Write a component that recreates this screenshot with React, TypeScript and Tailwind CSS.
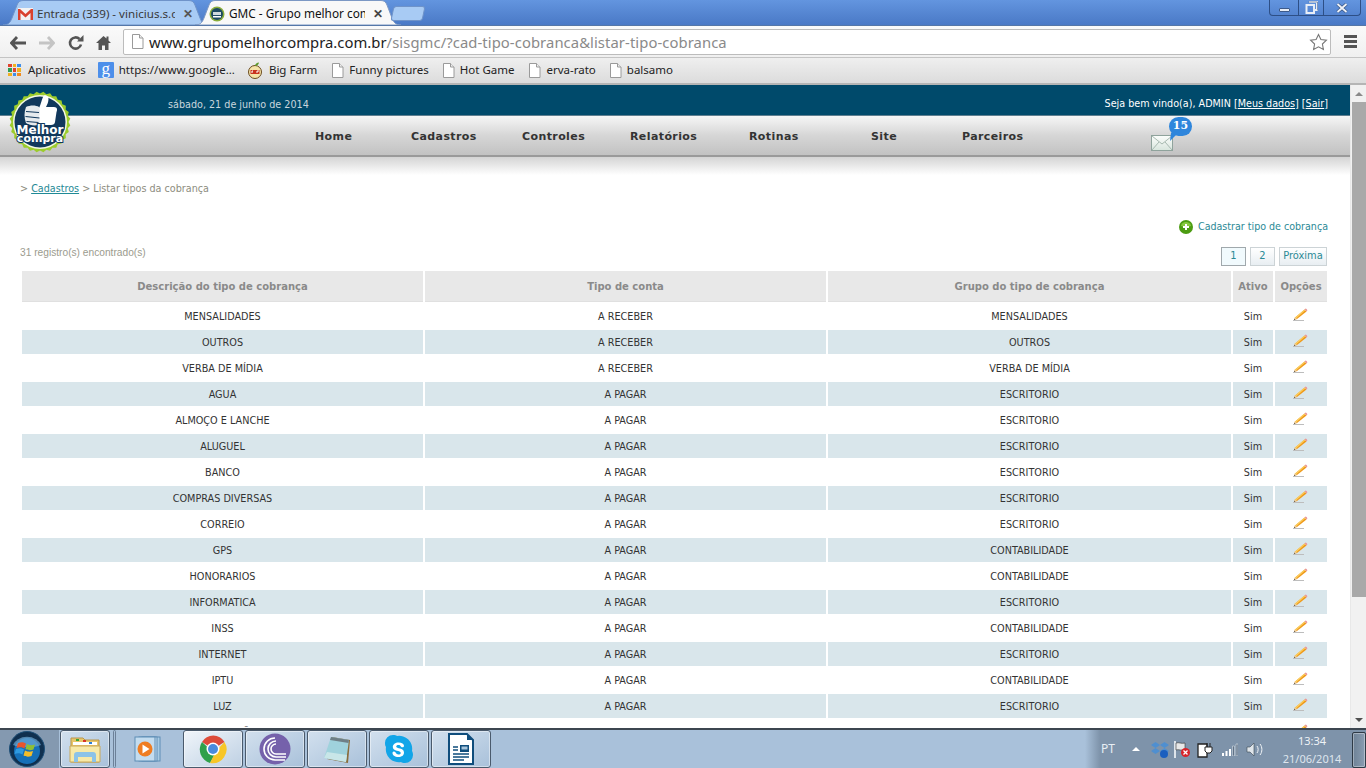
import React from 'react';

const rows = [
  ['MENSALIDADES', 'A RECEBER', 'MENSALIDADES'],
  ['OUTROS', 'A RECEBER', 'OUTROS'],
  ['VERBA DE MÍDIA', 'A RECEBER', 'VERBA DE MÍDIA'],
  ['AGUA', 'A PAGAR', 'ESCRITORIO'],
  ['ALMOÇO E LANCHE', 'A PAGAR', 'ESCRITORIO'],
  ['ALUGUEL', 'A PAGAR', 'ESCRITORIO'],
  ['BANCO', 'A PAGAR', 'ESCRITORIO'],
  ['COMPRAS DIVERSAS', 'A PAGAR', 'ESCRITORIO'],
  ['CORREIO', 'A PAGAR', 'ESCRITORIO'],
  ['GPS', 'A PAGAR', 'CONTABILIDADE'],
  ['HONORARIOS', 'A PAGAR', 'CONTABILIDADE'],
  ['INFORMATICA', 'A PAGAR', 'ESCRITORIO'],
  ['INSS', 'A PAGAR', 'CONTABILIDADE'],
  ['INTERNET', 'A PAGAR', 'ESCRITORIO'],
  ['IPTU', 'A PAGAR', 'CONTABILIDADE'],
  ['LUZ', 'A PAGAR', 'ESCRITORIO'],
  ['MANUTENÇÃO', 'A PAGAR', 'ESCRITORIO'],
];

const navItems = [
  { label: 'Home', w: 'w-[96px]' },
  { label: 'Cadastros', w: 'w-[111px]' },
  { label: 'Controles', w: 'w-[108px]' },
  { label: 'Relatórios', w: 'w-[119px]' },
  { label: 'Rotinas', w: 'w-[122px]' },
  { label: 'Site', w: 'w-[91px]' },
  { label: 'Parceiros', w: 'w-[96px]' },
];

const PageIcon = () => (
  <svg width="13" height="15" viewBox="0 0 13 15" className="shrink-0">
    <path d="M1.5 .5h7l3.500 3.500v10.500h-10.500z" fill="#fff" stroke="#9a9a9a" />
    <path d="M8.500 .5v3.500h3.500" fill="#eee" stroke="#9a9a9a" />
  </svg>
);

const Pencil = () => (
  <svg width="16" height="13" viewBox="0 0 16 13" className="mx-auto block">
    <path d="M0 12.500h11" stroke="#bdbdbd" strokeWidth="1" />
    <path d="M1 12l1-2.500L11.500 1.500l2 2L4 11z" fill="#f09a1a" />
    <path d="M2 9.500L11.500 1.500l.8.8L3 10.500z" fill="#fbd062" />
    <path d="M1 12l1-2.500 2 1.500z" fill="#e9cfa5" />
    <path d="M1 12l.4-1.200 .9.7z" fill="#333" />
    <path d="M11.500 1.500l1-1c.7 0 1.700 1 1.900 1.900l-.9 1.100z" fill="#ea9a9a" />
  </svg>
);

const Logo = () => (
  <svg width="62" height="62" viewBox="0 0 62 62" className="absolute left-[9px] top-[6px] z-10">
    <polygon
      fill="#9ccc2c"
      points={Array.from({ length: 56 }, (_, i) => {
        const a = (i * Math.PI) / 28;
        const r = i % 2 ? 30.500 : 28.500;
        return `${31 + r * Math.cos(a)},${31 + r * Math.sin(a)}`;
      }).join(' ')}
    />
    <circle cx="31" cy="31" r="27" fill="#f4f8e4" />
    <circle cx="31" cy="31" r="25.500" fill="#11385c" />
    <path d="M30 17C32 13 33 8 34 6C35 3 39.500 4 39.500 8C39.500 11 38 14 37 16L45 16C48.500 16 48.500 19 47.500 21L46 31C46 33 44 34 42 34L30 34Z" fill="#fff" />
    <path d="M17 16c4-2 10-2 13 0l1 5-1 5 1 5-2 3c-4 1-9 0-12-2-2-5-2-11 0-16z" fill="#e6eaee" />
    <path d="M17 20.500l13 1M16.500 25.500l14 1.500M17.500 30.500l12 1" stroke="#11385c" strokeWidth="1.100" />
    <text x="31" y="43" textAnchor="middle" fontFamily="'DejaVu Sans', sans-serif" fontWeight="700" fontSize="12" fill="#fff" stroke="#11385c" strokeWidth="2" paintOrder="stroke">Melhor</text>
    <text x="31" y="51" textAnchor="middle" fontFamily="'DejaVu Sans', sans-serif" fontWeight="700" fontSize="11" fill="#fff" stroke="#11385c" strokeWidth="2" paintOrder="stroke">compra</text>
  </svg>
);

const TabShape = ({ fill, stroke }: { fill: string; stroke: string }) => (
  <svg width="206" height="25" viewBox="0 0 206 25" className="absolute left-0 top-0">
    <path d="M0 25c5 0 7-2 9-7l5-13c1-3 3-4.500 6-4.500h166c3 0 5 1.500 6 4.500l5 13c2 5 4 7 9 7z" fill={fill} stroke={stroke} />
  </svg>
);

const Gmail = () => (
  <svg width="15" height="12" viewBox="0 0 15 12" className="shrink-0">
    <rect x="0" y="0" width="15" height="12" fill="#f3f3f3" />
    <path d="M0 12V1h2l5.500 5L13 1h2v11h-2.500V5L7.500 9.500 2.500 5v7z" fill="#d9412e" />
  </svg>
);

const Favicon = () => (
  <svg width="16" height="16" viewBox="0 0 16 16" className="shrink-0">
    <circle cx="8" cy="8" r="7.500" fill="#8aae3c" />
    <circle cx="8" cy="8" r="6" fill="#1d4a63" />
    <path d="M4 6h8v3H4z" fill="#cfd9dc" />
    <path d="M4 10h8v1.500H4z" fill="#fff" />
  </svg>
);

const Google8 = () => (
  <div className="flex h-[16px] w-[16px] shrink-0 items-center justify-center rounded-[1px] bg-[#4d8fea] pb-[3px] font-['Liberation_Serif',serif] text-[17px] leading-none text-white">
    g
  </div>
);

const AppsIcon = () => {
  const colors = ['#e0432f', '#f2b01e', '#3f8ee8', '#2f9e55', '#e0432f', '#f2b01e', '#f2b01e', '#3f8ee8', '#f08a1d'];
  return (
    <div className="grid h-[13px] w-[13px] shrink-0 grid-cols-3 gap-[1px]">
      {colors.map((c, i) => (
        <span key={i} className="block h-[3.600px] w-[3.600px]" style={{ backgroundColor: c }} />
      ))}
    </div>
  );
};

const BigFarm = () => (
  <svg width="16" height="17" viewBox="0 0 16 17" className="shrink-0">
    <circle cx="8" cy="10" r="6.500" fill="#f4e3a8" stroke="#6a4a1c" />
    <path d="M8 4c0-2 2-3.500 4-3.500-.3 2-2 3.500-4 3.500z" fill="#5c9a2c" />
    <path d="M3.500 8h9v4h-9z" fill="#c8321e" />
    <path d="M5 9v2M6 9H5M10 9h2M10 9v2" stroke="#fff" strokeWidth="1" />
  </svg>
);

const TaskButton = ({ children, active, narrow }: { children: React.ReactNode; active?: boolean; narrow?: boolean }) => (
  <div
    className={`flex h-[38px] shrink-0 items-center justify-center rounded-[3px] border border-[#4a5a6c] shadow-[inset_0_0_0_1px_rgba(255,255,255,.45)] ${
      narrow ? 'w-[50px]' : 'w-[60px]'
    } ${active ? 'bg-gradient-to-br from-[#f0f5fa] to-[#bed0e3]' : 'bg-gradient-to-br from-[#d2e0ee] to-[#a9c1da]'}`}
  >
    {children}
  </div>
);

export default function App() {
  return (
    <div className="flex h-[768px] w-[1366px] flex-col overflow-hidden bg-white font-['Noto_Sans',sans-serif]">
      {/* tab strip */}
      <div className="relative flex h-[25px] shrink-0 items-start bg-gradient-to-b from-[#6395df] to-[#4a79c6] pl-[3px]">
        <div className="relative h-[25px] w-[206px]">
          <TabShape fill="#a8cbf4" stroke="#6f93c9" />
          <div className="relative flex h-[25px] items-center pl-[15px] pt-[2px] text-[11.600px] text-[#3a3a3a]">
            <Gmail />
            <span className="ml-[4px] w-[138px] overflow-hidden whitespace-nowrap">Entrada (339) - vinicius.s.d</span>
            <span className="ml-[8px] text-[12px] font-bold text-[#555]">✕</span>
          </div>
        </div>
        <div className="relative ml-[-14px] h-[25px] w-[206px]">
          <TabShape fill="#f8f8f8" stroke="#7c98c4" />
          <div className="relative flex h-[25px] items-center pl-[14px] pt-[2px] text-[11.800px] text-[#111]">
            <Favicon />
            <span className="ml-[4px] w-[136px] overflow-hidden whitespace-nowrap">GMC - Grupo melhor com</span>
            <span className="ml-[8px] text-[12px] font-bold text-[#444]">✕</span>
          </div>
        </div>
        <div className="ml-[-9px] mt-[6px] h-[15px] w-[32px] -skew-x-12 rounded-[3px] border border-[#6f93c9] bg-[#a8cbf4]" />
        <div className="ml-auto mr-[5px] flex h-[16px] w-[92px] overflow-hidden rounded-b-[4px] border border-t-0 border-[#2d4f86] text-[#fff]">
          <div className="flex w-[29px] items-center justify-center border-r border-[#2d4f86]">
            <span className="mt-[4px] block h-[4px] w-[11px] rounded-[1px] border border-[#3d5a8a] bg-[#e8eef7]" />
          </div>
          <div className="flex w-[25px] items-center justify-center border-r border-[#2d4f86]">
            <svg width="13" height="13" viewBox="0 0 13 13">
              <path d="M4 1h8v8h-2M1.500 4h7.500v8h-7.500z" fill="none" stroke="#e8eef7" strokeWidth="2" />
              <path d="M3.500 1h9v8.500" fill="none" stroke="#3d5a8a" strokeWidth=".6" />
            </svg>
          </div>
          <div className="flex flex-1 items-center justify-center">
            <svg width="12" height="10" viewBox="0 0 12 10">
              <path d="M1.500 1l9 8M10.500 1l-9 8" stroke="#3d5a8a" strokeWidth="3.400" />
              <path d="M1.500 1l9 8M10.500 1l-9 8" stroke="#eef2f8" strokeWidth="1.800" />
            </svg>
          </div>
        </div>
      </div>

      {/* toolbar */}
      <div className="flex h-[32px] shrink-0 items-center border-t border-[#5577a8] bg-gradient-to-b from-[#fafafa] to-[#f0f0f0]">
        <div className="flex w-[123px] shrink-0 items-center pl-[10px] pt-[2px]">
          <svg width="16" height="14" viewBox="0 0 16 14">
            <path d="M7 1L1.500 7 7 13M2 7h14" fill="none" stroke="#555" strokeWidth="2.800" />
          </svg>
          <svg width="16" height="14" viewBox="0 0 16 14" className="ml-[13px]">
            <path d="M9 1l5.500 6L9 13M14 7H0" fill="none" stroke="#c4c4c4" strokeWidth="2.800" />
          </svg>
          <svg width="16" height="16" viewBox="0 0 16 16" className="ml-[13px]">
            <path d="M13 9.500A5.600 5.600 0 1 1 11.500 4" fill="none" stroke="#555" strokeWidth="2.600" />
            <path d="M9 6.500h6.500V0z" fill="#555" />
          </svg>
          <svg width="15" height="15" viewBox="0 0 15 15" className="ml-[12px]">
            <path d="M7.500 1L0 8h2.500v7h3.500v-4.500h3V15h3.500V8H15l-2.500-2.500V1.500h-2v2z" fill="#555" />
          </svg>
        </div>
        <div className="flex h-[26px] w-[1208px] items-center rounded-[2px] border border-[#bcbcbc] bg-white pl-[7px] pr-[2px] text-[14.800px] leading-none">
          <PageIcon />
          <span className="ml-[5px] whitespace-nowrap pt-[2px] text-[#222] tracking-[.03px]">www.grupomelhorcompra.com.br</span>
          <span className="whitespace-nowrap pt-[2px] text-[#8a8a8a] tracking-[.08px]">/sisgmc/?cad-tipo-cobranca&amp;listar-tipo-cobranca</span>
          <svg width="19" height="18" viewBox="0 0 19 18" className="ml-auto">
            <path d="M9.500 1.500l2.400 5 5.500.7-4 3.800 1 5.500-4.900-2.700-4.900 2.700 1-5.500-4-3.800 5.500-.7z" fill="#fff" stroke="#777" strokeWidth="1.100" />
          </svg>
        </div>
        <div className="ml-[13px] flex flex-col gap-[2px]">
          <span className="block h-[3px] w-[13px] bg-[#555]" />
          <span className="block h-[3px] w-[13px] bg-[#555]" />
          <span className="block h-[3px] w-[13px] bg-[#555]" />
        </div>
      </div>

      {/* bookmarks */}
      <div className="flex h-[28px] shrink-0 items-center border-t border-[#c4c4c4] border-b-2 border-b-[#b5b5b5] bg-gradient-to-b from-[#efefef] to-[#dcdcdc] pb-[1px] pl-[8px] text-[11.500px] text-[#222]">
        <AppsIcon />
        <span className="ml-[7px]">Aplicativos</span>
        <span className="ml-[12px] flex items-center gap-[5px]"><Google8 />https://www.google...</span>
        <span className="ml-[12px] flex items-center gap-[6px]"><BigFarm />Big Farm</span>
        <span className="ml-[14px] flex items-center gap-[5px]"><PageIcon />Funny pictures</span>
        <span className="ml-[13px] flex items-center gap-[5px]"><PageIcon />Hot Game</span>
        <span className="ml-[13px] flex items-center gap-[6px]"><PageIcon />erva-rato</span>
        <span className="ml-[13px] flex items-center gap-[5px]"><PageIcon />balsamo</span>
      </div>

      <div className="flex min-h-0 flex-1">
        {/* page */}
        <div className="relative min-h-0 w-[1350px] shrink-0 overflow-hidden">
          <Logo />
          <div className="flex h-[31px] items-center justify-between border-b border-[#5f7f90] bg-[#004a6b] pl-[168px] pr-[22px] pt-[10px] font-['DejaVu_Sans_Condensed','DejaVu_Sans',sans-serif] text-[10.700px] text-white">
            <span className="text-[#c8d6dd]">sábado, 21 de junho de 2014</span>
            <span className="pb-[1px]">
              Seja bem vindo(a), ADMIN [<span className="underline">Meus dados</span>] [<span className="underline">Sair</span>]
            </span>
          </div>
          <div className="relative flex h-[41px] items-center border-b-2 border-[#9a9a9a] bg-[linear-gradient(#f6f6f6,#d6d6d6_50%,#c2c2c2)] pl-[315px] pt-[4px] font-['DejaVu_Sans',sans-serif] text-[11px] font-bold tracking-[.4px] text-[#333]">
            {navItems.map((n) => (
              <span key={n.label} className={`${n.w} shrink-0 whitespace-nowrap`}>{n.label}</span>
            ))}
            <div className="absolute left-[1151px] top-[19px] h-[16px] w-[22px] border border-[#8fa39c] bg-gradient-to-b from-[#fbfdfb] to-[#d9e6de]">
              <svg width="20" height="14" viewBox="0 0 20 14" className="block">
                <path d="M0 0l10 8 10-8M0 14l7-8M20 14l-7-8" fill="none" stroke="#a7b8b0" />
              </svg>
            </div>
            <div className="absolute left-[1169px] top-[1px] flex h-[19px] w-[23px] items-center justify-center rounded-[12px] bg-[#2f86dc] font-['DejaVu_Serif',serif] text-[11px] font-bold tracking-normal text-white">
              15
            </div>
            <svg width="8" height="8" viewBox="0 0 8 8" className="absolute left-[1170px] top-[17px]">
              <path d="M1 0h7L0 8z" fill="#2f86dc" />
            </svg>
          </div>
          <div className="h-[18px] bg-gradient-to-b from-[#d4d4d4] to-white" />

          {/* breadcrumb */}
          <div className="mt-[6px] pl-[20px] font-['DejaVu_Sans_Condensed','DejaVu_Sans',sans-serif] text-[10.700px] text-[#8d8d80]">
            &gt; <span className="text-[#1f8a96] underline">Cadastros</span> &gt; Listar tipos da cobrança
          </div>

          <div className="mt-[22px] flex items-center justify-end pr-[22px] font-['DejaVu_Sans_Condensed','DejaVu_Sans',sans-serif] text-[10.600px] text-[#2b8a96]">
            <svg width="14" height="14" viewBox="0 0 14 14" className="mr-[5px] mt-[1px]">
              <circle cx="7" cy="7" r="7" fill="#4c9c12" />
              <path d="M2 6a5 4 0 0 1 10 0c-2 1-8 1-10 0z" fill="#86c83e" />
              <path d="M7 4v6M4 7h6" stroke="#fff" strokeWidth="2" />
            </svg>
            Cadastrar tipo de cobrança
          </div>

          <div className="mt-[1px] flex items-start justify-between pl-[20px] pr-[23px]">
            <span className="mt-[9px] font-['Liberation_Sans',sans-serif] text-[10.200px] text-[#9b9b8e]">31 registro(s) encontrado(s)</span>
            <div className="mt-[11px] flex gap-[4px] font-['DejaVu_Sans_Condensed','DejaVu_Sans',sans-serif] text-[11px] text-[#2b8a96]">
              <span className="flex h-[19px] w-[25px] items-center justify-center border border-[#a0a8ac] bg-[#f1fafd]">1</span>
              <span className="flex h-[19px] w-[25px] items-center justify-center border border-[#ccd3d6] bg-gradient-to-b from-white to-[#e8eef2]">2</span>
              <span className="flex h-[19px] w-[48px] items-center justify-center border border-[#ccd3d6] bg-gradient-to-b from-white to-[#e8eef2]">Próxima</span>
            </div>
          </div>

          {/* table */}
          <table className="ml-[20px] mt-[3px] w-[1309px] table-fixed border-separate border-spacing-[2px] font-['DejaVu_Sans_Condensed','DejaVu_Sans',sans-serif] text-[10.750px] text-[#333]">
            <colgroup>
              <col className="w-[401px]" />
              <col className="w-[401px]" />
              <col className="w-[403px]" />
              <col className="w-[40px]" />
              <col className="w-[52px]" />
            </colgroup>
            <thead>
              <tr className="h-[31px] font-['DejaVu_Sans',sans-serif] text-[10px] font-bold text-[#8a8a8a]">
                {['Descrição do tipo de cobrança', 'Tipo de conta', 'Grupo do tipo de cobrança', 'Ativo', 'Opções'].map((h) => (
                  <th key={h} className="overflow-hidden whitespace-nowrap border-b border-[#e0e0e0] bg-[#e8e8e8] p-0 pt-[2px] font-bold">{h}</th>
                ))}
              </tr>
            </thead>
            <tbody>
              {rows.map((r, i) => (
                <tr key={i} className={`h-[24px] ${i % 2 ? 'bg-[#d9e6eb]' : ''}`}>
                  <td className="p-0 pt-[2px] text-center">{r[0]}</td>
                  <td className="p-0 pt-[2px] text-center">{r[1]}</td>
                  <td className="p-0 pt-[2px] text-center">{r[2]}</td>
                  <td className="p-0 pt-[2px] text-center">Sim</td>
                  <td className="p-0 pb-[2px]"><Pencil /></td>
                </tr>
              ))}
            </tbody>
          </table>
        </div>

        {/* scrollbar */}
        <div className="flex w-[16px] shrink-0 flex-col items-center border-l border-[#e8e8e8] bg-[#f1f1f1]">
          <span className="mt-[7px] h-0 w-0 border-x-[4px] border-b-[4px] border-x-transparent border-b-[#8a8a8a]" />
          <span className="mt-[6px] h-[495px] w-[14px] bg-[#a9a9a9]" />
          <span className="mt-auto mb-[6px] h-0 w-0 border-x-[4px] border-t-[4px] border-x-transparent border-t-[#505050]" />
        </div>
      </div>

      {/* taskbar */}
      <div className="flex h-[40px] shrink-0 items-center border-t-2 border-[#3c4650] bg-[linear-gradient(90deg,#a9c1da_0,#a9c1da_1085px,#7e93aa_1100px,#7e93aa_100%)] font-['Noto_Sans',sans-serif]">
        <div className="flex h-full w-[59px] shrink-0 items-center bg-[#8499b0] pl-[9px]">
          <svg width="36" height="36" viewBox="0 0 36 36">
            <circle cx="18" cy="18" r="17.500" fill="#10304f" stroke="#1d4f78" />
            <circle cx="18" cy="20" r="13" fill="#1670b8" />
            <path d="M4 14a14.500 11 0 0 1 28 0c-6 3-22 3-28 0z" fill="#6da9d6" opacity=".7" />
            <path d="M9 12c3-1 5-1 8 .5l-1.500 5c-3-1.500-5-1.500-8-.5z" fill="#e9552b" />
            <path d="M18 13c3 1.500 5 1.500 8 .5l-1.500 5c-3 1-5 1-8-.5z" fill="#8fbf35" />
            <path d="M7 18c3-1 5-1 8 .5l-1.500 5c-3-1.500-5-1.500-8-.5z" fill="#2f9ae0" />
            <path d="M16 19.500c3 1.500 5 1.500 8 .5l-1.500 5c-3 1-5 1-8-.5z" fill="#f4bd2a" />
          </svg>
        </div>
        <div className="ml-px"><TaskButton narrow>
          <svg width="32" height="28" viewBox="0 0 32 28">
            <path d="M2 3h12l2 2h14v22H2z" fill="#e9c66a" stroke="#b8954a" />
            <path d="M4 7h24v3H4z" fill="#fff" />
            <path d="M7 4h3v2H7z" fill="#3aa63a" />
            <path d="M14 5h3v2h-3z" fill="#d8332a" />
            <path d="M20 7h3v2h-3z" fill="#2a7fd8" />
            <path d="M1 11h30v16H1z" fill="#f7e9a8" stroke="#c9a85a" />
            <path d="M5 27v-7c0-2 1-3 3-3h16c2 0 3 1 3 3v7h-4v-5H9v5z" fill="#8cc3e8" />
          </svg>
        </TaskButton></div>
        <div className="ml-[3px] h-[38px] w-[3px] rounded-[2px] border border-[#6c8098]" />
        <div className="flex w-[65px] shrink-0 items-center justify-center">
          <svg width="30" height="26" viewBox="0 0 30 26">
            <rect x="8" y="1" width="18" height="24" fill="#a9cbe4" stroke="#5f8eb5" />
            <rect x="5" y="1" width="18" height="24" fill="#c3dcef" stroke="#5f8eb5" />
            <rect x="1" y="1" width="20" height="24" fill="#c3dcef" stroke="#5f8eb5" />
            <circle cx="11" cy="13" r="7.500" fill="#ef7d22" />
            <path d="M8.500 8.500l7 4.500-7 4.500z" fill="#fff" />
          </svg>
        </div>
        <div className="ml-[2px] flex gap-[2px]">
          <TaskButton active>
            <svg width="30" height="30" viewBox="0 0 30 30">
              <path d="M15 15L4 8a13 13 0 0 1 22.500 0z" fill="#dd4b39" />
              <path d="M4 8a14 14 0 0 0 8 21l5-9z" fill="#2fa04a" />
              <path d="M26.500 8a14 14 0 0 1-14.500 21l6-12z" fill="#f7c627" />
              <circle cx="15" cy="15" r="6.500" fill="#fff" />
              <circle cx="15" cy="15" r="5" fill="#4a8bdc" />
            </svg>
          </TaskButton>
          <TaskButton>
            <svg width="32" height="32" viewBox="0 0 32 32">
              <circle cx="16" cy="16" r="15.500" fill="#7561ab" />
              <path d="M27 24H17a8 8 0 0 1 0-16M27 21H17a5 5 0 0 1 0-10M26 27H16a11 11 0 0 1 0-22" fill="none" stroke="#fff" strokeWidth="1.600" />
            </svg>
          </TaskButton>
          <TaskButton>
            <svg width="30" height="30" viewBox="0 0 30 30">
              <path d="M10 3l18 3-2 23L5 25z" fill="#8a6d3b" />
              <path d="M9 3l18 3-3 22L2 24z" fill="#9fd2dc" />
              <path d="M9 3l18 3-.5 3L8 6z" fill="#6f7f86" />
              <path d="M5 18l20 3-1 7L2 24z" fill="#c8e6e8" />
            </svg>
          </TaskButton>
          <TaskButton>
            <svg width="30" height="30" viewBox="0 0 30 30">
              <path d="M9 1a8 8 0 0 0-8 8c0 2 .4 3 1 4a13 13 0 0 0 15 15c1 .6 2 1 4 1a8 8 0 0 0 8-8c0-2-.4-3-1-4A13 13 0 0 0 13 2c-1-.6-2-1-4-1z" fill="#12a5e8" />
              <path d="M20 18.500c0 3-2.500 4.500-5.500 4.500-4 0-6-2-6-4 0-1 .8-1.500 1.600-1.500 2 0 1.500 3 4.400 3 1.500 0 2.300-.8 2.300-1.600 0-2.800-8-1.300-8-6 0-2.500 2.500-4.400 5.800-4.400 3.200 0 5.400 1.500 5.400 3.300 0 1-.8 1.500-1.600 1.500-1.800 0-1.500-2.300-4-2.300-1.300 0-2.200.6-2.200 1.500 0 2.500 7.800 1.100 7.800 5.900z" fill="#fff" />
            </svg>
          </TaskButton>
          <TaskButton>
            <svg width="26" height="32" viewBox="0 0 26 32">
              <path d="M1 1h18l6 6v24H1z" fill="#fff" stroke="#0f4d7c" strokeWidth="2" />
              <path d="M19 1l6 6h-6z" fill="#0f4d7c" />
              <path d="M12 12h9v7h-9z" fill="#0f4d7c" />
              <path d="M13.500 13.500h6v3h-6z" fill="#a9c6dc" />
              <path d="M5 14h5M5 17h5M5 21h16M5 24h16M5 27h11" stroke="#0f4d7c" strokeWidth="1.600" />
            </svg>
          </TaskButton>
        </div>
        <div className="ml-auto flex h-full items-center text-white">
          <span className="mr-[17px] text-[12px] text-[#e8eef4]">PT</span>
          <span className="mr-[11px] h-0 w-0 border-x-[4px] border-b-[4px] border-x-transparent border-b-white" />
          <svg width="18" height="17" viewBox="0 0 18 17" className="mr-[5px]">
            <path d="M4.500 1L9 4 4.500 7 0 4zM13.500 1L18 4l-4.500 3L9 4zM4.500 7L9 10l-4.500 3L0 10zM13.500 7L18 10l-4.500 3L9 10z" fill="#4f8fd0" />
            <circle cx="13" cy="13" r="4" fill="#1b5fbf" />
          </svg>
          <svg width="16" height="17" viewBox="0 0 16 17" className="mr-[7px]">
            <path d="M1 0v17" stroke="#fff" strokeWidth="1.500" />
            <path d="M2 2c3-1 5 1 9 0v7c-4 1-6-1-9 0z" fill="#e8e8e8" stroke="#333" strokeWidth=".6" />
            <circle cx="11.500" cy="11.500" r="4.500" fill="#d8232a" />
            <path d="M9.500 9.500l4 4M13.500 9.500l-4 4" stroke="#fff" strokeWidth="1.300" />
          </svg>
          <svg width="16" height="17" viewBox="0 0 16 17" className="mr-[9px]">
            <path d="M1 3h9v13H1z" fill="#fff" stroke="#222" strokeWidth="1.300" />
            <path d="M8 6h7v4l-2 2h-3L8 10zM10 2v4M13 2v4" fill="#fff" stroke="#222" />
          </svg>
          <svg width="16" height="13" viewBox="0 0 16 13" className="mr-[8px]">
            <path d="M0 10h2v3H0zM3.500 8h2v5h-2zM7 6h2v7H7z" fill="#fff" />
            <path d="M10.500 3h2v10h-2zM14 1h2v12h-2z" fill="#5f7186" stroke="#d8e0e8" strokeWidth=".6" />
          </svg>
          <svg width="18" height="15" viewBox="0 0 18 15" className="mr-[17px]">
            <path d="M1 5h3l4-4v13l-4-4H1z" fill="#dfe5ea" stroke="#3a4652" strokeWidth=".6" />
            <path d="M11 4c1.500 2 1.500 5 0 7M14 2c2.500 3 2.500 8 0 11" fill="none" stroke="#f2f5f8" />
          </svg>
          <div className="mr-[9px] flex w-[62px] flex-col items-center text-[11px] leading-[18px] text-[#eef2f6]">
            <span className="pt-[1px]">13:34</span>
            <span className="text-[#dfe6ee]">21/06/2014</span>
          </div>
          <div className="mt-[1px] h-[36px] w-[14px] rounded-[2px] border border-[#2e3a46] bg-gradient-to-r from-[#6e8296] to-[#8a9db2] shadow-[inset_0_0_0_1px_rgba(255,255,255,.35)]" />
        </div>
      </div>
    </div>
  );
}
